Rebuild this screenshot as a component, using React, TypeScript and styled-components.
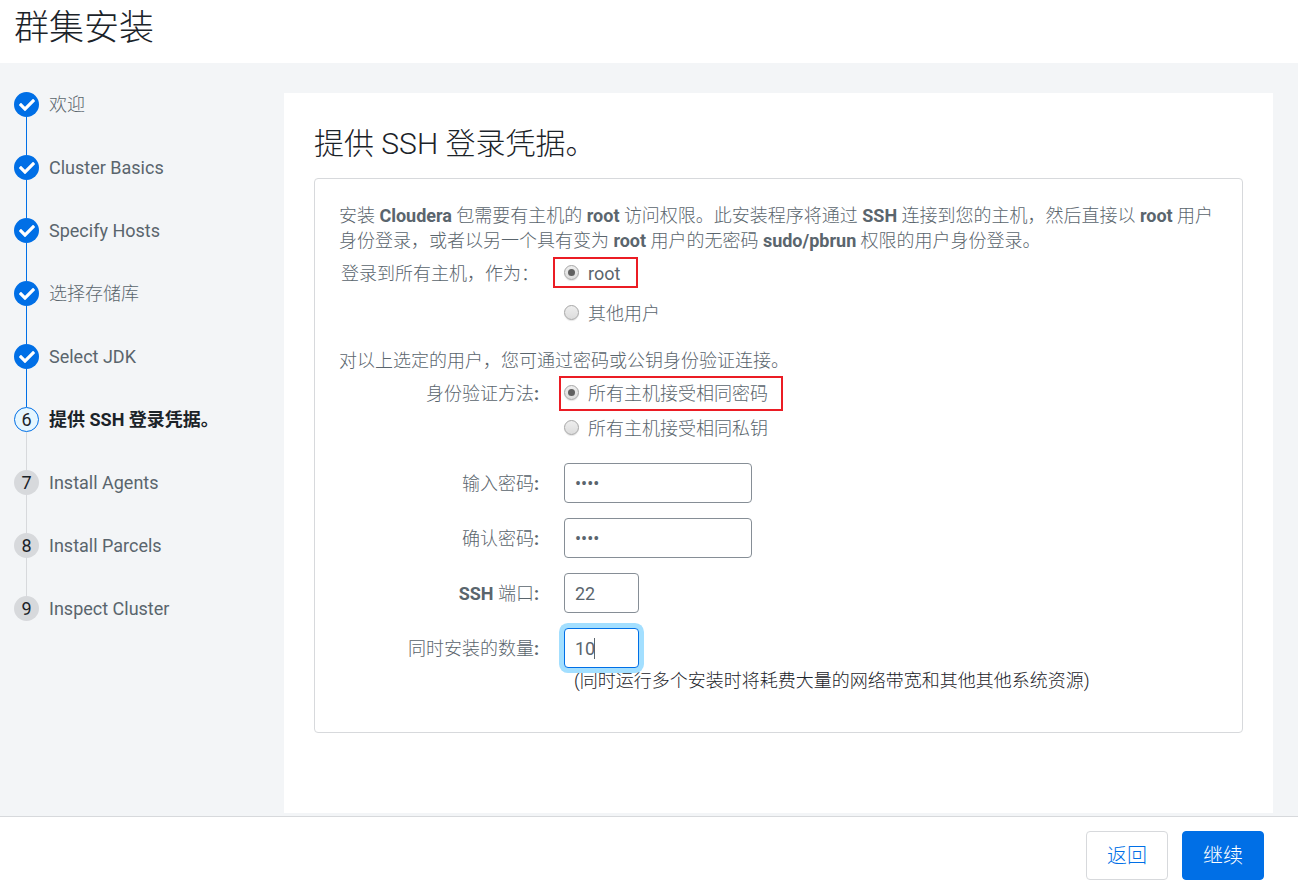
import React, { useState } from "react";
import styled, { createGlobalStyle, css } from "styled-components";
import { FaCheck } from "react-icons/fa";

const color = {
  ink: "#1b2329",
  text: "#5a656d",
  blue: "#006fe6",
  surface: "#f3f5f7",
  line: "#d7d9dc",
  field: "#868e96",
  mark: "#eb1c24",
};

const GlobalStyle = createGlobalStyle`
  *, *::before, *::after { box-sizing: border-box; }
  body {
    margin: 0;
    background: #fff;
    color: ${color.text};
    font: 300 18px/25px Roboto, "Noto Sans CJK SC", sans-serif;
  }
  h1, h2, p, ol, fieldset { margin: 0; padding: 0; border: 0; }
`;

const Page = styled.div`
  display: flex;
  flex-direction: column;
  min-height: 100vh;
`;

const Header = styled.header`
  padding: 6px 14px 12px;
`;

const PageTitle = styled.h1`
  color: ${color.ink};
  font-size: 35px;
  font-weight: 300;
  line-height: 45px;
`;

const Body = styled.div`
  display: flex;
  flex: 1;
  padding: 29px 25px 3px 0;
  background: ${color.surface};
`;

const Sidebar = styled.nav`
  flex: 0 0 284px;
  padding-left: 14px;
`;

const StepList = styled.ol`
  list-style: none;
`;

type StepState = "done" | "current" | "todo";

const Step = styled.li<{ $state: StepState }>`
  display: grid;
  grid-template-columns: 25px 1fr;
  column-gap: 10px;
  color: ${(p) => (p.$state === "current" ? color.ink : color.text)};
  font-weight: ${(p) => (p.$state === "current" ? 700 : 300)};

  &:not(:last-child)::after {
    content: "";
    justify-self: center;
    width: 1px;
    height: 38px;
    background: ${(p) => (p.$state === "done" ? color.blue : color.line)};
  }
`;

const badgeStyles = {
  done: css`
    background: ${color.blue};
    color: #fff;
  `,
  current: css`
    border: 1px solid ${color.blue};
    background: #e5f6ff;
  `,
  todo: css`
    background: ${color.line};
  `,
};

const StepBadge = styled.span<{ $state: StepState }>`
  display: flex;
  align-items: center;
  justify-content: center;
  width: 25px;
  height: 25px;
  border-radius: 50%;
  color: ${color.ink};
  font-weight: 400;
  ${(p) => badgeStyles[p.$state]}
`;

const Card = styled.main`
  flex: 1;
  margin-top: 1px;
  padding: 30px;
  background: #fff;
`;

const CardTitle = styled.h2`
  margin-bottom: 13px;
  color: ${color.ink};
  font-size: 30px;
  font-weight: 300;
  line-height: 42px;
`;

const Panel = styled.form`
  padding: 24px 24px 39px;
  border: 1px solid ${color.line};
  border-radius: 4px;
`;

const Latin = styled.span`
  font-weight: 400;
`;

const Strong = styled.strong`
  font-weight: 700;
`;

const RadioRow = styled.fieldset`
  display: flex;
  gap: 25px;
  margin: 8px 0 22px;
`;

const RowLabel = styled.span`
  flex: 0 0 200px;
  text-align: right;
  white-space: nowrap;
`;

const Options = styled.div<{ $gap: number }>`
  display: flex;
  flex-direction: column;
  align-items: flex-start;
  gap: ${(p) => p.$gap}px;
`;

const Option = styled.label<{ $frame?: string }>`
  position: relative;
  display: flex;
  align-items: flex-start;
  gap: 9px;

  ${(p) =>
    p.$frame &&
    css`
      &::before {
        content: "";
        position: absolute;
        inset: ${p.$frame};
        border: 2px solid ${color.mark};
        pointer-events: none;
      }
    `}
`;

const Radio = styled.input`
  appearance: none;
  display: grid;
  place-items: center;
  width: 15px;
  height: 15px;
  margin: 4px 0 0;
  border: 1px solid #a6a6a6;
  border-radius: 50%;
  background: linear-gradient(#eeeeee, #dcdcdc);
  box-shadow: 0 1px 1px #e4e4e4;

  &:checked::before {
    content: "";
    width: 7px;
    height: 7px;
    border-radius: 50%;
    background: #606060;
  }
`;

const Fields = styled.div`
  display: flex;
  flex-direction: column;
  gap: 15px;
`;

const FieldRow = styled.div`
  display: flex;
  align-items: center;
  gap: 25px;
`;

const FieldLabel = styled.label`
  flex: 0 0 200px;
  text-align: right;
  white-space: nowrap;
`;

const InputWrap = styled.div`
  position: relative;
`;

const Input = styled.input<{ $narrow?: boolean }>`
  display: block;
  width: ${(p) => (p.$narrow ? 75 : 188)}px;
  height: 40px;
  padding: 0 10px;
  border: 1px solid ${color.field};
  border-radius: 4px;
  outline: none;
  background: #fff;
  color: ${color.text};
  font: inherit;
  font-weight: 400;
  caret-color: transparent;

  &:focus {
    border-color: ${color.blue};
    box-shadow: 0 0 0 5px #a3dfff;
  }
`;

const Caret = styled.span`
  position: absolute;
  top: 10px;
  left: 30px;
  width: 1px;
  height: 21px;
  background: ${color.text};
  pointer-events: none;
`;

const Hint = styled.p`
  padding-left: 235px;
  color: ${color.ink};
`;

const Footer = styled.footer`
  display: flex;
  justify-content: flex-end;
  gap: 14px;
  padding: 14px 34px 9px;
  border-top: 1px solid ${color.line};
`;

const Button = styled.button<{ $primary?: boolean }>`
  height: 49px;
  padding: 2px 20px 0;
  border: 1px solid ${(p) => (p.$primary ? color.blue : color.line)};
  border-radius: 4px;
  background: ${(p) => (p.$primary ? color.blue : "#fff")};
  color: ${(p) => (p.$primary ? "#fff" : color.blue)};
  font: inherit;
  font-size: 20px;
`;

const steps: { name: string; latin?: boolean }[] = [
  { name: "欢迎" },
  { name: "Cluster Basics", latin: true },
  { name: "Specify Hosts", latin: true },
  { name: "选择存储库" },
  { name: "Select JDK", latin: true },
  { name: "提供 SSH 登录凭据。" },
  { name: "Install Agents", latin: true },
  { name: "Install Parcels", latin: true },
  { name: "Inspect Cluster", latin: true },
];

const currentStep = 5;

const stateOf = (index: number): StepState =>
  index < currentStep ? "done" : index === currentStep ? "current" : "todo";

export default function App() {
  const [user, setUser] = useState("root");
  const [method, setMethod] = useState("password");
  const [countFocused, setCountFocused] = useState(true);

  return (
    <Page>
      <GlobalStyle />
      <Header>
        <PageTitle>群集安装</PageTitle>
      </Header>
      <Body>
        <Sidebar>
          <StepList>
            {steps.map(({ name, latin }, i) => (
              <Step key={name} $state={stateOf(i)}>
                <StepBadge $state={stateOf(i)}>
                  {i < currentStep ? <FaCheck size={16} /> : i + 1}
                </StepBadge>
                {latin ? <Latin>{name}</Latin> : <span>{name}</span>}
              </Step>
            ))}
          </StepList>
        </Sidebar>
        <Card>
          <CardTitle>提供 SSH 登录凭据。</CardTitle>
          <Panel onSubmit={(e) => e.preventDefault()}>
            <p>
              安装 <Strong>Cloudera</Strong> 包需要有主机的 <Strong>root</Strong>{" "}
              访问权限。此安装程序将通过 <Strong>SSH</Strong>{" "}
              连接到您的主机，然后直接以 <Strong>root</Strong>{" "}
              用户身份登录，或者以另一个具有变为 <Strong>root</Strong>{" "}
              用户的无密码 <Strong>sudo/pbrun</Strong> 权限的用户身份登录。
            </p>
            <RadioRow aria-labelledby="user-label">
              <RowLabel id="user-label">登录到所有主机，作为：</RowLabel>
              <Options $gap={15}>
                <Option $frame="-4px -18px -2px -11px">
                  <Radio
                    type="radio"
                    name="user"
                    checked={user === "root"}
                    onChange={() => setUser("root")}
                  />
                  <Latin>root</Latin>
                </Option>
                <Option>
                  <Radio
                    type="radio"
                    name="user"
                    checked={user === "other"}
                    onChange={() => setUser("other")}
                  />
                  其他用户
                </Option>
              </Options>
            </RadioRow>
            <p>对以上选定的用户，您可通过密码或公钥身份验证连接。</p>
            <RadioRow aria-labelledby="method-label">
              <RowLabel id="method-label">
                身份验证方法<Strong>:</Strong>
              </RowLabel>
              <Options $gap={10}>
                <Option $frame="-5px -15px -5px -5px">
                  <Radio
                    type="radio"
                    name="method"
                    checked={method === "password"}
                    onChange={() => setMethod("password")}
                  />
                  所有主机接受相同密码
                </Option>
                <Option>
                  <Radio
                    type="radio"
                    name="method"
                    checked={method === "key"}
                    onChange={() => setMethod("key")}
                  />
                  所有主机接受相同私钥
                </Option>
              </Options>
            </RadioRow>
            <Fields>
              <FieldRow>
                <FieldLabel htmlFor="password">
                  输入密码<Strong>:</Strong>
                </FieldLabel>
                <Input id="password" type="password" defaultValue="root" />
              </FieldRow>
              <FieldRow>
                <FieldLabel htmlFor="confirm">
                  确认密码<Strong>:</Strong>
                </FieldLabel>
                <Input id="confirm" type="password" defaultValue="root" />
              </FieldRow>
              <FieldRow>
                <FieldLabel htmlFor="port">
                  <Strong>SSH</Strong> 端口<Strong>:</Strong>
                </FieldLabel>
                <Input id="port" $narrow defaultValue="22" />
              </FieldRow>
              <FieldRow>
                <FieldLabel htmlFor="count">
                  同时安装的数量<Strong>:</Strong>
                </FieldLabel>
                <InputWrap>
                  <Input
                    id="count"
                    $narrow
                    autoFocus
                    defaultValue="10"
                    onFocus={() => setCountFocused(true)}
                    onBlur={() => setCountFocused(false)}
                  />
                  {countFocused && <Caret />}
                </InputWrap>
              </FieldRow>
            </Fields>
            <Hint>(同时运行多个安装时将耗费大量的网络带宽和其他其他系统资源)</Hint>
          </Panel>
        </Card>
      </Body>
      <Footer>
        <Button type="button">返回</Button>
        <Button type="button" $primary>
          继续
        </Button>
      </Footer>
    </Page>
  );
}
